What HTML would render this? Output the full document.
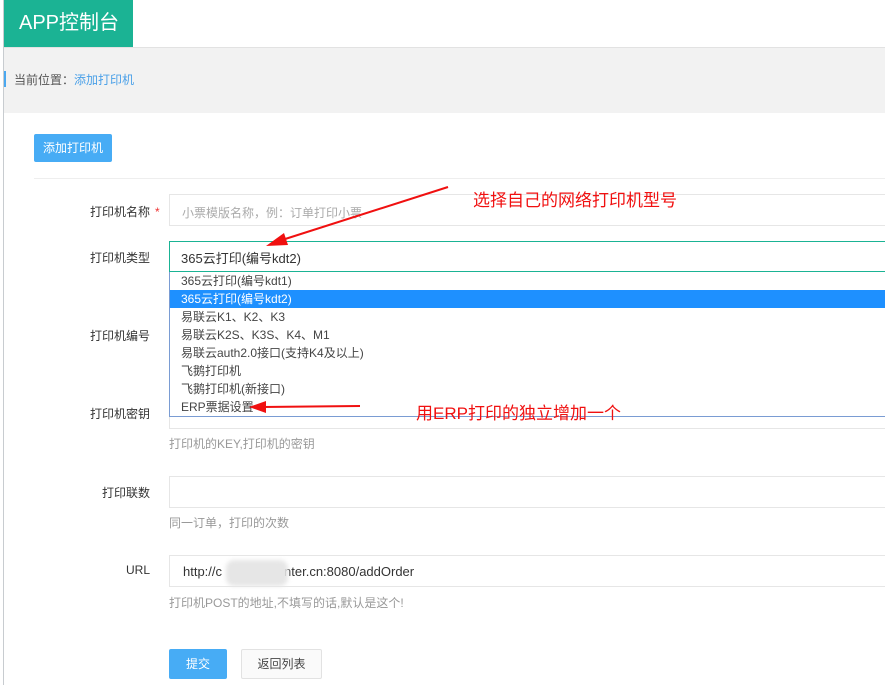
<!DOCTYPE html>
<html><head><meta charset="utf-8"><style>
body{margin:0;width:885px;height:685px;overflow:hidden;background:#fff;font-family:"Liberation Sans","Noto Sans CJK SC",sans-serif;position:relative;font-size:12px;color:#333}
.a{position:absolute}
.lbl{position:absolute;right:735px;font-size:12px;color:#333;white-space:nowrap}
.inp{position:absolute;left:169px;right:-2px;height:30px;border:1px solid #e6e6e6;box-sizing:border-box;background:#fff}
.help{position:absolute;left:169px;font-size:12px;color:#999}
.dd div{height:18px;line-height:18px;padding-left:11px;font-size:12px;color:#444}
</style></head><body>
<div class="a" style="left:3px;top:0;width:1px;height:685px;background:#c8ccd0"></div>
<div class="a" style="left:4px;top:0;width:129px;height:47px;background:#1bb394;color:#fff;font-size:20px;line-height:46px;padding-left:15px;box-sizing:border-box">APP控制台</div>
<div class="a" style="left:4px;top:47px;right:0;height:1px;background:#e2e2e2"></div>
<div class="a" style="left:4px;top:48px;right:0;height:65px;background:#f2f2f2"></div>
<div class="a" style="left:4px;top:71px;width:2px;height:16px;background:#4aa8f0"></div>
<div class="a" style="left:14px;top:71px;font-size:12px;color:#555">当前位置：<span style="color:#4aa0e8">添加打印机</span></div>
<div class="a" style="left:34px;top:134px;width:78px;height:28px;background:#47acf5;border-radius:2px;color:#fff;line-height:28px;text-align:center">添加打印机</div>
<div class="a" style="left:34px;top:178px;right:0;height:1px;background:#eee"></div>

<div class="lbl" style="top:203px">打印机名称</div><div class="a" style="left:155px;top:205px;color:#e33">*</div>
<div class="inp" style="top:194px;height:32px;color:#aaa;padding:9px 0 0 12px">小票模版名称，例：订单打印小票</div>

<div class="lbl" style="top:249px">打印机类型</div>

<div class="lbl" style="top:327px">打印机编号</div>
<div class="lbl" style="top:405px">打印机密钥</div>
<div class="inp" style="top:397px;height:32px"></div>
<div class="help" style="top:435px">打印机的KEY,打印机的密钥</div>

<div class="a dd" style="left:169px;right:-2px;top:271px;height:146px;border-left:1px solid #7a9cd3;border-bottom:1px solid #7a9cd3;background:#fff;box-sizing:border-box;padding-top:1px">
<div>365云打印(编号kdt1)</div>
<div style="background:#1e90ff;color:#fff">365云打印(编号kdt2)</div>
<div>易联云K1、K2、K3</div>
<div>易联云K2S、K3S、K4、M1</div>
<div>易联云auth2.0接口(支持K4及以上)</div>
<div>飞鹅打印机</div>
<div>飞鹅打印机(新接口)</div>
<div>ERP票据设置</div>
</div>
<div class="inp" style="top:241px;height:31px;border:1px solid #1ab394;color:#333;padding:6px 0 0 11px;font-size:13px;z-index:2">365云打印(编号kdt2)</div>

<div class="lbl" style="top:484px">打印联数</div>
<div class="inp" style="top:476px;height:32px"></div>
<div class="help" style="top:514px">同一订单，打印的次数</div>

<div class="lbl" style="top:563px">URL</div>
<div class="inp" style="top:555px;height:32px;color:#333;font-size:13px;padding:8px 0 0 13px">http://c<span style="display:inline-block;width:62px"></span>nter.cn:8080/addOrder</div>
<div class="a" style="left:226px;top:560px;width:62px;height:26px;background:#e6e6e6;border-radius:8px;filter:blur(2px)"></div>
<div class="help" style="top:594px">打印机POST的地址,不填写的话,默认是这个!</div>

<div class="a" style="left:169px;top:649px;width:58px;height:30px;background:#47acf5;border-radius:2px;color:#fff;line-height:30px;text-align:center">提交</div>
<div class="a" style="left:241px;top:649px;width:81px;height:30px;border:1px solid #e2e2e2;box-sizing:border-box;border-radius:2px;background:#fafafa;color:#444;line-height:28px;text-align:center">返回列表</div>

<div class="a" style="left:473px;top:186px;font-size:17px;color:#f01010;z-index:3">选择自己的网络打印机型号</div>
<div class="a" style="left:416px;top:399px;font-size:17px;color:#f01010;z-index:3">用ERP打印的独立增加一个</div>
<svg class="a" style="left:0;top:0;z-index:3" width="885" height="685">
<line x1="448" y1="187" x2="282" y2="240" stroke="#f01010" stroke-width="2"/>
<polygon points="266,246 284,233 288,245" fill="#f01010"/>
<line x1="360" y1="406" x2="262" y2="407" stroke="#f01010" stroke-width="2"/>
<polygon points="249,407 266,401 266,413" fill="#f01010"/>
</svg>
</body></html>
